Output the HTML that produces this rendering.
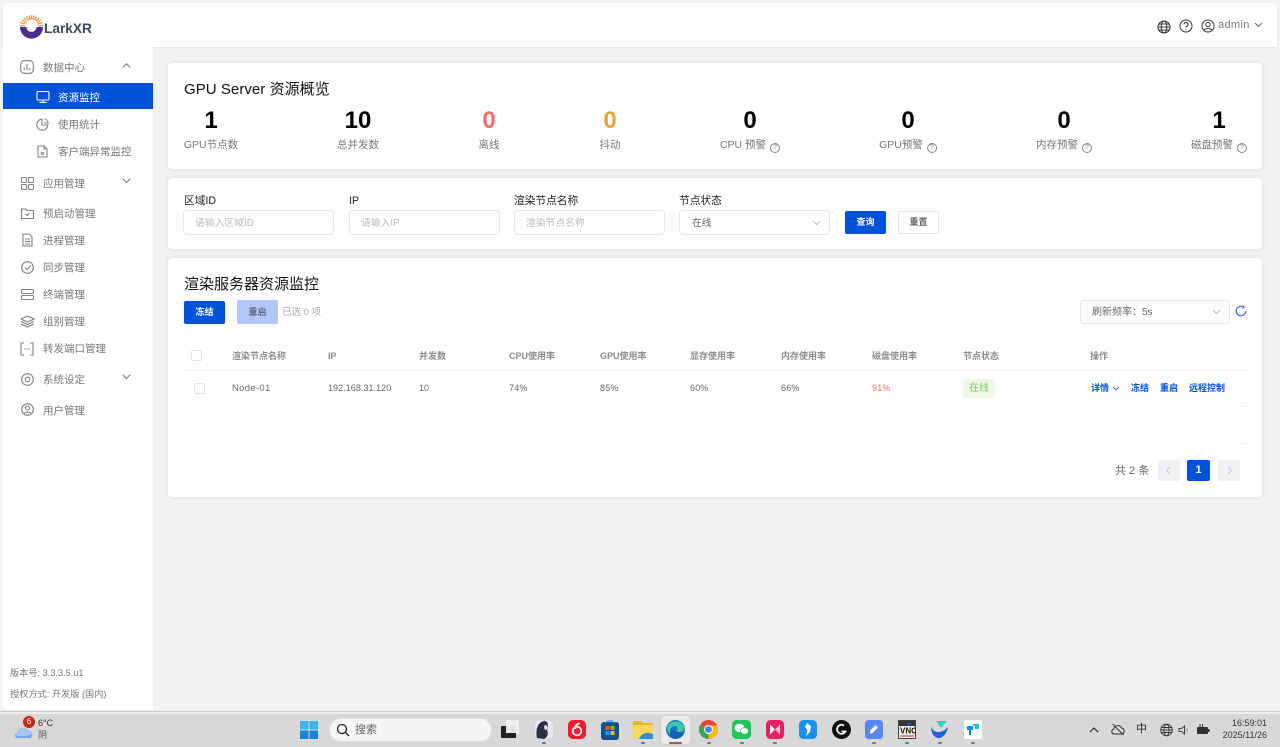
<!DOCTYPE html>
<html lang="zh-CN"><head><meta charset="utf-8"><title>LarkXR</title>
<style>
*{box-sizing:border-box}
html,body{margin:0;padding:0;width:1280px;height:747px;overflow:hidden;background:#f2f2f2;font-family:"Liberation Sans","Noto Sans CJK SC",sans-serif;color:#333}
.a{position:absolute;white-space:nowrap}
.card{position:absolute;background:#fff;border-radius:4px;box-shadow:0 0 6px rgba(0,0,0,.09)}
.m{position:absolute;left:43px;font-size:10.5px;color:#777;line-height:16px;white-space:nowrap;transform:translateY(1px)}
.ic{position:absolute;fill:none;stroke:#808080;stroke-width:1.1}
.num{position:absolute;top:108px;font-size:24px;font-weight:700;color:#000;line-height:26px;transform:translateX(-50%)}
.lab{position:absolute;top:138px;font-size:10.5px;color:#777;line-height:15px;white-space:nowrap;transform:translateX(-50%)}
.q{display:inline-block;width:10px;height:10px;border:1px solid #888;border-radius:50%;font-size:7px;line-height:8px;text-align:center;margin-left:4px;vertical-align:-1px}
.fl{position:absolute;top:194px;font-size:10.7px;color:#222;line-height:15px;white-space:nowrap}
.inp{position:absolute;top:210px;height:25px;width:151px;border:1px solid #e6e8ef;border-radius:4px;font-size:9.8px;color:#bbb;line-height:25px;padding-left:11px;background:#fff;white-space:nowrap}
.btn{position:absolute;border-radius:2px;font-size:9px;text-align:center;font-weight:700}
.th{position:absolute;top:350px;font-size:9px;color:#8c8c8c;line-height:13px;font-weight:700;white-space:nowrap}
.td{position:absolute;top:382px;font-size:9px;color:#666;line-height:13px;white-space:nowrap}
.lk{position:absolute;top:382px;font-size:9px;color:#0052d9;line-height:13px;font-weight:700;white-space:nowrap}
.cb{position:absolute;width:11px;height:11px;border:1px solid #e3e3e8;border-radius:2px;background:#fff}
.dot{position:absolute;top:742px;width:4px;height:2px;border-radius:1px;background:#777}
.app{position:absolute}
</style></head><body>

<div class="a" style="left:3px;top:3px;width:1274px;height:44px;background:#fff;border-radius:5px 5px 0 0;box-shadow:0 1px 2px rgba(0,0,0,.05)"></div>
<div class="a" style="left:3px;top:47px;width:150px;height:663px;background:#fff;border-radius:0 0 0 5px"></div>

<!-- logo -->
<svg class="a" style="left:19px;top:15px" width="25" height="24" viewBox="0 0 25 24">
<g stroke="#f29148" stroke-width="1.300" fill="none">
<path d="M1 10.500 L6 11M1.500 7.500 L6.300 9M3 5 L7 7.500M5 3 L8.200 6.200M7.500 1.500 L9.800 5.300M10 .6 L11.200 4.800M12.500 .3 L12.500 4.500M15 .6 L13.800 4.800M17.500 1.500 L15.200 5.300M20 3 L16.800 6.200M22 5 L18 7.500M23.500 7.500 L18.700 9M24 10.500 L19 11"/>
</g>
<path d="M1 12 H7.500 A5 5 0 0 0 17.500 12 H24 A11.500 11.700 0 0 1 1 12Z" fill="#4a2f8f"/>
</svg>
<div class="a" style="left:44px;top:20px;font-size:13.7px;font-weight:700;color:#3d4a5c;line-height:17px">LarkXR</div>

<!-- top right -->
<svg class="a" style="left:1157px;top:20px" width="14" height="14" viewBox="0 0 14 14" fill="none" stroke="#333" stroke-width="1"><circle cx="7" cy="7" r="6"/><ellipse cx="7" cy="7" rx="2.800" ry="6"/><path d="M1 7H13M1.800 4H12.200M1.800 10H12.200"/></svg>
<svg class="a" style="left:1179px;top:19px" width="14" height="14" viewBox="0 0 14 14" fill="none" stroke="#333" stroke-width="1"><circle cx="7" cy="7" r="6"/><path d="M5 5.500A2 2 0 1 1 7.500 7.400C7 7.600 7 8 7 8.600"/><path d="M7 10V10.800"/></svg>
<svg class="a" style="left:1201px;top:19px" width="14" height="14" viewBox="0 0 14 14" fill="none" stroke="#333" stroke-width="1"><circle cx="7" cy="7" r="6"/><circle cx="7" cy="5.500" r="2.200"/><path d="M3 11.500C4 9 10 9 11 11.500"/></svg>
<div class="a" style="left:1218px;top:18px;font-size:11px;color:#777;line-height:15px;letter-spacing:.35px">admin</div>
<svg class="a" style="left:1254px;top:22px" width="9" height="6" viewBox="0 0 9 6" fill="none" stroke="#666"><path d="M1 1L4.500 4.500L8 1"/></svg>

<!-- sidebar -->
<div class="a" style="left:3px;top:83px;width:150px;height:26px;background:#0052d9"></div>

<svg class="ic" style="left:20px;top:60px" width="14" height="14" viewBox="0 0 14 14"><rect x=".7" y=".7" width="12.600" height="12.600" rx="3.500"/><path d="M4.200 7.500V10.200M7 4V10.200M9.800 8V10.200"/></svg>
<div class="m" style="top:59px">数据中心</div>
<svg class="ic" style="left:122px;top:63px" width="9" height="5" viewBox="0 0 9 5"><path d="M.7 4.500L4.500 .7L8.300 4.500"/></svg>

<svg class="ic" style="left:36px;top:91px;stroke:#fff" width="14" height="12" viewBox="0 0 14 12"><rect x="1" y="0.500" width="12" height="8.500" rx="1"/><path d="M7 9V11M3.500 11.300H10.500"/></svg>
<div class="m" style="left:58px;top:89px;color:#fff">资源监控</div>

<svg class="ic" style="left:36px;top:118px" width="13" height="13" viewBox="0 0 13 13"><path d="M6 1.200A5.500 5.500 0 1 0 11.800 7H6Z"/><path d="M8 .8A5 5 0 0 1 12.200 5H8" stroke-width=".9"/></svg>
<div class="m" style="left:58px;top:116px">使用统计</div>

<svg class="ic" style="left:37px;top:145px" width="11" height="13" viewBox="0 0 11 13"><path d="M1 1H7L10 4V12H1Z"/><path d="M7 1V4H10M4 7L7 10M7 7L4 10"/></svg>
<div class="m" style="left:58px;top:143px">客户端异常监控</div>

<svg class="ic" style="left:21px;top:177px" width="13" height="13" viewBox="0 0 13 13"><rect x="0.500" y="0.500" width="5" height="5" rx="1"/><rect x="7.500" y="0.500" width="5" height="5" rx="1"/><rect x="0.500" y="7.500" width="5" height="5" rx="1"/><rect x="7.500" y="7.500" width="5" height="5" rx="1"/></svg>
<div class="m" style="top:175px">应用管理</div>
<svg class="ic" style="left:122px;top:178px" width="9" height="5" viewBox="0 0 9 5"><path d="M.7 .7L4.500 4.500L8.300 .7"/></svg>

<svg class="ic" style="left:21px;top:208px" width="13" height="11" viewBox="0 0 13 11"><path d="M0.500 1H5L6 2.500H12.500V10.500H0.500Z"/><path d="M4.500 6L6 7.500L8.500 5"/></svg>
<div class="m" style="top:205px">预启动管理</div>

<svg class="ic" style="left:22px;top:233px" width="11" height="14" viewBox="0 0 11 14"><path d="M1 1H7L10 4V13H1Z"/><path d="M3 6H8M3 8.500H8M3 11H8"/></svg>
<div class="m" style="top:232px">进程管理</div>

<svg class="ic" style="left:21px;top:261px" width="13" height="13" viewBox="0 0 13 13"><circle cx="6.500" cy="6.500" r="5.800"/><path d="M4 6.500L6 8.500L9.500 4.500"/></svg>
<div class="m" style="top:259px">同步管理</div>

<svg class="ic" style="left:21px;top:289px" width="13" height="11" viewBox="0 0 13 11"><rect x="0.500" y="0.500" width="12" height="4" rx="1"/><rect x="0.500" y="6.500" width="12" height="4" rx="1"/></svg>
<div class="m" style="top:286px">终端管理</div>

<svg class="ic" style="left:20px;top:315px" width="15" height="13" viewBox="0 0 15 13"><path d="M7.500 1L14 4L7.500 7L1 4Z"/><path d="M1 6.500L7.500 9.500L14 6.500M1 9L7.500 12L14 9"/></svg>
<div class="m" style="top:313px">组别管理</div>

<svg class="ic" style="left:20px;top:342px" width="14" height="14" viewBox="0 0 14 14"><path d="M4 1H1V13H4M10 1H13V13H10"/><path d="M4 7H5.500M6.300 7H7.700M8.500 7H10"/></svg>
<div class="m" style="top:340px">转发端口管理</div>

<svg class="ic" style="left:21px;top:373px" width="13" height="13" viewBox="0 0 13 13"><circle cx="6.500" cy="6.500" r="5.800"/><circle cx="6.500" cy="6.500" r="2.300"/></svg>
<div class="m" style="top:371px">系统设定</div>
<svg class="ic" style="left:122px;top:374px" width="9" height="5" viewBox="0 0 9 5"><path d="M.7 .7L4.500 4.500L8.300 .7"/></svg>

<svg class="ic" style="left:21px;top:403px" width="13" height="13" viewBox="0 0 13 13"><circle cx="6.500" cy="6.500" r="5.800"/><circle cx="6.500" cy="5" r="2"/><path d="M2.800 11C3.500 8.500 9.500 8.500 10.200 11"/></svg>
<div class="m" style="top:402px">用户管理</div>

<div class="a" style="left:10px;top:666px;font-size:9.2px;color:#777;line-height:14px">版本号: 3.3.3.5.u1</div>
<div class="a" style="left:10px;top:687px;font-size:9.2px;color:#777;line-height:14px">授权方式: 开发版 (国内)</div>

<!-- overview card -->
<div class="card" style="left:168px;top:63px;width:1094px;height:106px"></div>
<div class="a" style="left:184px;top:80px;font-size:15px;color:#111;line-height:20px;letter-spacing:.05px">GPU Server 资源概览</div>
<div class="num" style="left:211px">1</div><div class="lab" style="left:211px">GPU节点数</div>
<div class="num" style="left:358px">10</div><div class="lab" style="left:358px">总并发数</div>
<div class="num" style="left:489px;color:#f56c6c">0</div><div class="lab" style="left:489px">离线</div>
<div class="num" style="left:610px;color:#e6a23c">0</div><div class="lab" style="left:610px">抖动</div>
<div class="num" style="left:750px">0</div><div class="lab" style="left:750px">CPU 预警<span class="q">?</span></div>
<div class="num" style="left:908px">0</div><div class="lab" style="left:908px">GPU预警<span class="q">?</span></div>
<div class="num" style="left:1064px">0</div><div class="lab" style="left:1064px">内存预警<span class="q">?</span></div>
<div class="num" style="left:1219px">1</div><div class="lab" style="left:1219px">磁盘预警<span class="q">?</span></div>

<!-- filter card -->
<div class="card" style="left:168px;top:178px;width:1094px;height:71px"></div>
<div class="fl" style="left:184px">区域ID</div><div class="inp" style="left:183px">请输入区域ID</div>
<div class="fl" style="left:349px">IP</div><div class="inp" style="left:349px">请输入IP</div>
<div class="fl" style="left:514px">渲染节点名称</div><div class="inp" style="left:514px">渲染节点名称</div>
<div class="fl" style="left:679px">节点状态</div><div class="inp" style="left:679px;color:#666;padding-left:12px">在线</div>
<svg class="a" style="left:812px;top:220px" width="9" height="6" viewBox="0 0 9 6" fill="none" stroke="#bbb"><path d="M1 1L4.500 4.500L8 1"/></svg>
<div class="btn" style="left:845px;top:211px;width:41px;height:23px;background:#0052d9;color:#fff;line-height:23px">查询</div>
<div class="btn" style="left:898px;top:211px;width:41px;height:23px;background:#fff;border:1px solid #e6e8ef;color:#666;line-height:21px">重置</div>

<!-- table card -->
<div class="card" style="left:168px;top:258px;width:1094px;height:239px"></div>
<div class="a" style="left:184px;top:274px;font-size:15px;color:#111;line-height:21px">渲染服务器资源监控</div>
<div class="btn" style="left:184px;top:301px;width:41px;height:23px;background:#0052d9;color:#fff;line-height:23px">冻结</div>
<div class="btn" style="left:237px;top:300px;width:41px;height:24px;background:#b3c7f7;color:#5a6b8c;line-height:24px">重启</div>
<div class="a" style="left:282px;top:306px;font-size:9.5px;color:#aaa;line-height:14px">已选 0 项</div>

<div class="inp" style="left:1080px;top:300px;width:150px;height:24px;line-height:24px;font-size:10px;color:#666;padding-left:11px">刷新频率：5s</div>
<svg class="a" style="left:1212px;top:309px" width="9" height="6" viewBox="0 0 9 6" fill="none" stroke="#bbb"><path d="M1 1L4.500 4.500L8 1"/></svg>
<svg class="a" style="left:1235px;top:305px" width="12" height="12" viewBox="0 0 12 12" fill="none" stroke="#2a6ae0" stroke-width="1.200"><path d="M10.800 6A4.800 4.800 0 1 1 8.500 1.900"/><path d="M8 0.500L9 2.300L7.200 3.300" stroke-width="1"/></svg>

<div class="cb" style="left:191px;top:350px"></div>
<div class="th" style="left:232px">渲染节点名称</div>
<div class="th" style="left:328px">IP</div>
<div class="th" style="left:419px">并发数</div>
<div class="th" style="left:509px">CPU使用率</div>
<div class="th" style="left:600px">GPU使用率</div>
<div class="th" style="left:690px">显存使用率</div>
<div class="th" style="left:781px">内存使用率</div>
<div class="th" style="left:872px">磁盘使用率</div>
<div class="th" style="left:963px">节点状态</div>
<div class="th" style="left:1090px">操作</div>
<div class="a" style="left:184px;top:370px;width:1064px;height:1px;background:#f0f1f6"></div>

<div class="cb" style="left:194px;top:383px"></div>
<div class="td" style="left:232px;font-size:9.5px;letter-spacing:.3px">Node-01</div>
<div class="td" style="left:328px;letter-spacing:.05px">192.168.31.120</div>
<div class="td" style="left:419px">10</div>
<div class="td" style="left:509px;letter-spacing:.2px">74%</div>
<div class="td" style="left:600px;letter-spacing:.2px">85%</div>
<div class="td" style="left:690px;letter-spacing:.2px">60%</div>
<div class="td" style="left:781px;letter-spacing:.2px">66%</div>
<div class="td" style="left:872px;color:#f56c6c;letter-spacing:.2px">91%</div>
<div class="a" style="left:963px;top:379px;width:32px;height:19px;background:#eef8e8;border-radius:3px;color:#7bc85a;font-size:10px;line-height:19px;text-align:center">在线</div>
<div class="lk" style="left:1091px">详情</div>
<svg class="a" style="left:1112px;top:386px" width="8" height="5" viewBox="0 0 8 5" fill="none" stroke="#3a70d8"><path d="M1 1L4 4L7 1"/></svg>
<div class="lk" style="left:1131px">冻结</div>
<div class="lk" style="left:1160px">重启</div>
<div class="lk" style="left:1189px">远程控制</div>
<div class="a" style="left:1237px;top:406px;width:11px;height:1px;background:#f3f4f8"></div>
<div class="a" style="left:1237px;top:443px;width:11px;height:1px;background:#f3f4f8"></div>

<div class="a" style="left:1115px;top:464px;font-size:11px;color:#666;line-height:15px">共 2 条</div>
<div class="a" style="left:1158px;top:460px;width:22px;height:21px;background:#f0f1f3;border-radius:2px"></div>
<svg class="a" style="left:1165px;top:466px" width="7" height="9" viewBox="0 0 7 9" fill="none" stroke="#c0c4cc"><path d="M5 1L1.500 4.500L5 8"/></svg>
<div class="a" style="left:1187px;top:460px;width:23px;height:21px;background:#0052d9;border-radius:2px;color:#fff;font-size:11px;font-weight:700;line-height:21px;text-align:center">1</div>
<div class="a" style="left:1218px;top:460px;width:22px;height:21px;background:#f0f1f3;border-radius:2px"></div>
<svg class="a" style="left:1226px;top:466px" width="7" height="9" viewBox="0 0 7 9" fill="none" stroke="#c0c4cc"><path d="M2 1L5.500 4.500L2 8"/></svg>

<!-- taskbar -->
<div class="a" style="left:0;top:711px;width:1280px;height:1px;background:#c9c9c9"></div>
<div class="a" style="left:0;top:712px;width:1280px;height:2px;background:#ededed"></div>
<div class="a" style="left:0;top:714px;width:1280px;height:33px;background:#d8d8d8"></div>

<svg class="a" style="left:13px;top:723px" width="22" height="16" viewBox="0 0 22 16"><path d="M4 15C0 15 0 10 4 9.500C5 4 12 3 15 7C20 6.500 21 15 16 15Z" fill="#a9c4ee"/><path d="M2 12C6 14 14 14 19 11L18 15H4Z" fill="#6f9fe6"/></svg>
<div class="a" style="left:23px;top:716px;width:12px;height:12px;border-radius:50%;background:#c42b1c;color:#fff;font-size:8px;line-height:12px;text-align:center">6</div>
<div class="a" style="left:38px;top:717px;font-size:9px;color:#333;line-height:12px">6°C</div>
<div class="a" style="left:38px;top:729px;font-size:9px;color:#555;line-height:13px">阴</div>

<svg class="a" style="left:300px;top:721px" width="18" height="18" viewBox="0 0 18 18"><rect width="8.500" height="8.500" fill="#3fb4ee"/><rect x="9.500" width="8.500" height="8.500" fill="#3fb4ee"/><rect y="9.500" width="8.500" height="8.500" fill="#0f84d8"/><rect x="9.500" y="9.500" width="8.500" height="8.500" fill="#0f84d8"/></svg>
<div class="a" style="left:329px;top:718px;width:163px;height:24px;border-radius:12px;background:#f5f5f5;border:1px solid #e2e2e2"></div>
<svg class="a" style="left:336px;top:723px" width="14" height="14" viewBox="0 0 14 14" fill="none" stroke="#222" stroke-width="1.300"><circle cx="6" cy="6" r="4.500"/><path d="M9.500 9.500L13 13"/></svg>
<div class="a" style="left:355px;top:722px;font-size:11px;color:#666;line-height:16px">搜索</div>

<!-- task view -->
<div class="app" style="left:506px;top:720px;width:13px;height:14px;background:#f2f2f2;opacity:.9"></div>
<div class="app" style="left:501px;top:726px;width:15px;height:12px;background:#222"></div>
<div class="app" style="left:506px;top:726px;width:10px;height:7px;background:#e4e4e4"></div>

<svg class="app" style="left:535px;top:720px" width="18" height="19" viewBox="0 0 18 19"><rect width="18" height="19" rx="5" fill="#e4e7ee"/><path d="M2 18C0 8 4 1 10 1C14 2 13 7 12 10C14 14 12 18 9 19Z" fill="#2a3040"/><path d="M10 5C13 5 13 9 11 10C9 10 8.500 6 10 5Z" fill="#e8e2e0"/></svg>

<svg class="app" style="left:568px;top:720px" width="18" height="19" viewBox="0 0 18 19"><rect width="18" height="19" rx="5" fill="#ee1d2b"/><circle cx="9" cy="11" r="4.300" fill="none" stroke="#fff" stroke-width="1.700"/><path d="M11.500 3.500C8.500 4 6.500 6 7.500 9" fill="none" stroke="#fff" stroke-width="1.700"/></svg>

<svg class="app" style="left:601px;top:720px" width="18" height="20" viewBox="0 0 18 20"><rect y="2" width="18" height="18" rx="3" fill="#16508d"/><path d="M5 3C5 0 13 0 13 3" fill="none" stroke="#37a0d8" stroke-width="1.300"/><rect x="4.500" y="6" width="4" height="4" fill="#f25022"/><rect x="9.500" y="6" width="4" height="4" fill="#7fba00"/><rect x="4.500" y="11" width="4" height="4" fill="#00a4ef"/><rect x="9.500" y="11" width="4" height="4" fill="#ffb900"/></svg>

<svg class="app" style="left:633px;top:720px" width="20" height="19" viewBox="0 0 20 19"><path d="M0 1H8L10 3H20V8H0Z" fill="#e8b52c"/><rect y="5" width="20" height="14" rx="1" fill="#fbd75b"/><path d="M6 19C9 12 15 12 20 14V19Z" fill="#2b8fd8"/></svg>

<div class="app" style="left:661px;top:716px;width:29px;height:28px;background:#ececec;border-radius:4px;box-shadow:0 0 1px #aaa"></div>
<svg class="app" style="left:666px;top:720px" width="19" height="19" viewBox="0 0 19 19"><circle cx="9.500" cy="9.500" r="9.500" fill="#1a78c8"/><path d="M1 7C4 0 15 -1 18.500 8C19 12 13 13 10 11C14 8 10 5 6.500 6.500C3.500 8 3.500 12 6 15C3 14 1 11 1 7Z" fill="#3fc8a8"/><path d="M10 11C12 13 17 13 18.500 10C18 15 13 19 9 19C5 18 3 14 5 10" fill="#0f60b0"/></svg>
<div class="a" style="left:669px;top:742px;width:13px;height:2px;background:#9a5d50;border-radius:1px"></div>

<svg class="app" style="left:699px;top:720px" width="19" height="19" viewBox="0 0 19 19"><circle cx="9.500" cy="9.500" r="9.500" fill="#e8453c"/><path d="M9.500 9.500L1.200 5A9.500 9.500 0 0 0 9.500 19Z" fill="#34a853"/><path d="M9.500 5.500H18.200A9.500 9.500 0 0 1 9.500 19Z" fill="#fbbc05"/><circle cx="9.500" cy="9.500" r="4.500" fill="#fff"/><circle cx="9.500" cy="9.500" r="3.400" fill="#4285f4"/></svg>

<svg class="app" style="left:732px;top:720px" width="19" height="19" viewBox="0 0 19 19"><rect width="19" height="19" rx="4.500" fill="#1fc75a"/><ellipse cx="7.500" cy="8" rx="5" ry="4.300" fill="#fff"/><ellipse cx="12.500" cy="11" rx="4" ry="3.400" fill="#fff" stroke="#1fc75a" stroke-width=".7"/></svg>

<svg class="app" style="left:766px;top:720px" width="18" height="19" viewBox="0 0 18 19"><rect width="18" height="19" rx="4.500" fill="#ea1f63"/><path d="M4 4.500L9 9.500L4 14.500Z" fill="#fff"/><path d="M14 4.500L9 9.500L14 14.500Z" fill="#f8c0d4"/></svg>

<svg class="app" style="left:799px;top:720px" width="18" height="19" viewBox="0 0 18 19"><rect width="18" height="19" rx="4.500" fill="#1990f0"/><path d="M8 3L12 6L11 12L7 16L8.500 10L6 7Z" fill="#fff"/></svg>

<svg class="app" style="left:832px;top:720px" width="19" height="19" viewBox="0 0 19 19"><circle cx="9.500" cy="9.500" r="9.500" fill="#111"/><path d="M12 5.500A4.500 4.500 0 1 0 13.500 11.500H9.500" fill="none" stroke="#fff" stroke-width="1.700"/></svg>

<svg class="app" style="left:865px;top:720px" width="18" height="19" viewBox="0 0 18 19"><rect width="18" height="19" rx="3.500" fill="#5a86f5"/><path d="M5 14L5.500 10L10.500 5L13 7.500L8 12.500Z" fill="#fff"/></svg>

<svg class="app" style="left:898px;top:720px" width="18" height="19" viewBox="0 0 18 19"><rect x=".5" y=".5" width="17" height="18" fill="#f4f0ea" stroke="#444"/><rect x="1" y="1" width="16" height="5" fill="#333"/><circle cx="11" cy="4" r="1.800" fill="#2a58c8"/><text x="2" y="13.500" font-family="Liberation Sans" font-size="8" font-weight="700" fill="#111">VNC</text><rect x="2" y="15.500" width="14" height="1" fill="#c22"/></svg>

<svg class="app" style="left:930px;top:720px" width="19" height="19" viewBox="0 0 19 19"><path d="M6 1H17L11 8Z" fill="#38d0c0"/><path d="M1 6C3 14 12 14 18 7C17 13 13 18 9 18C4 18 1 13 1 6Z" fill="#1f60d8"/></svg>

<svg class="app" style="left:964px;top:720px" width="18" height="19" viewBox="0 0 18 19"><rect width="18" height="19" rx="2" fill="#fff"/><path d="M3 6H9V10H7V15H5V10H3Z" fill="#0a8ee8"/><path d="M9 4H15V9H11V6H9Z" fill="#1fc0e8"/></svg>

<div class="dot" style="left:542px"></div>
<div class="dot" style="left:641px"></div><div class="dot" style="left:707px"></div><div class="dot" style="left:740px"></div><div class="dot" style="left:773px"></div><div class="dot" style="left:872px"></div><div class="dot" style="left:905px"></div><div class="dot" style="left:938px"></div><div class="dot" style="left:971px"></div>

<svg class="a" style="left:1089px;top:726px" width="10" height="7" viewBox="0 0 10 7" fill="none" stroke="#222" stroke-width="1.100"><path d="M1 6L5 2L9 6"/></svg>
<svg class="a" style="left:1111px;top:723px" width="14" height="13" viewBox="0 0 14 13" fill="none" stroke="#333"><path d="M3.500 11C0 11 0 6.500 3 6C3.500 2 9 1.500 10.500 5C13.500 5 14 10 11 11Z"/><path d="M1.500 1L12.500 12"/></svg>
<div class="a" style="left:1136px;top:722px;font-size:11px;color:#222;line-height:15px">中</div>
<svg class="a" style="left:1160px;top:723px" width="13" height="14" viewBox="0 0 13 14" fill="none" stroke="#333" stroke-width=".9"><circle cx="6.500" cy="7" r="5.800"/><ellipse cx="6.500" cy="7" rx="2.500" ry="5.800"/><path d="M1 7H12M1.500 4.500H11.500M1.500 9.500H11.500"/></svg>
<svg class="a" style="left:1178px;top:724px" width="12" height="12" viewBox="0 0 12 12" fill="none" stroke="#444"><path d="M1 4.500H3.500L6.500 2V10L3.500 7.500H1Z"/><path d="M8.500 4C9.500 5 9.500 7 8.500 8" stroke="#999"/></svg>
<svg class="a" style="left:1196px;top:723px" width="14" height="13" viewBox="0 0 14 13"><rect x="1" y="4" width="11" height="7" rx="1" fill="#333"/><rect x="12" y="6" width="1.500" height="3" fill="#333"/><path d="M4 1V4M6.500 1V4" stroke="#333"/></svg>
<div class="a" style="left:1222px;top:717px;width:45px;font-size:9px;color:#333;line-height:13px;text-align:right">16:59:01</div>
<div class="a" style="left:1212px;top:729px;width:55px;font-size:9px;color:#333;line-height:13px;text-align:right">2025/11/26</div>

</body></html>
